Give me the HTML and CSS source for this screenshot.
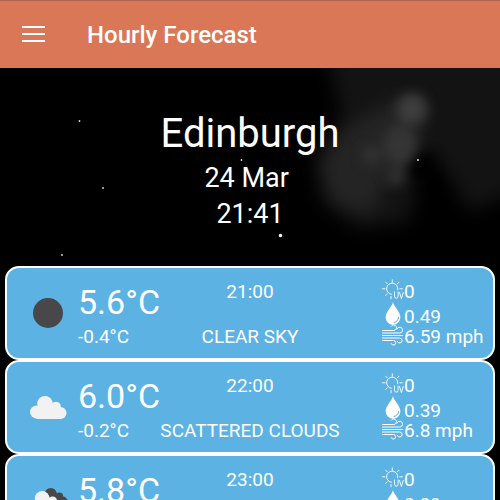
FILE: index.html
```html
<!DOCTYPE html>
<html lang="en">
<head>
<meta charset="utf-8">
<meta name="viewport" content="width=device-width, initial-scale=1">
<title>Hourly Forecast</title>
<link rel="stylesheet" href="styles.css">
</head>
<body>
<svg class="symbols" aria-hidden="true">
  <symbol id="uv" viewBox="0 0 22 22">
    <g fill="none" stroke="#fff" stroke-width="0.900" stroke-linecap="round">
      <path d="M9.500 15.300A5.600 5.600 0 1 1 15.700 10.800"/>
      <path d="M10.300 0.800v2.400M3.700 3.200l1.700 1.700M17 3.200l-1.700 1.700M0.500 9.800h2.600M17.800 9.800h2.600M3.700 16.500l1.700-1.700M9 17.400v2.400"/>
      <path d="M12.500 13v4.200q0 2 1.800 2t1.800-2V13M17.500 13.500l1.900 6 1.900-6"/>
    </g>
  </symbol>
  <symbol id="drop" viewBox="0 0 22 24">
    <path fill="#fff" d="M11 0C10.300 4.500 3.600 9.800 3.600 15.300a7.400 7.400 0 0 0 14.800 0C18.400 9.800 11.700 4.500 11 0z"/>
    <path fill="none" stroke="#5cb2e2" stroke-width="1" stroke-linecap="round" d="M16.600 15.500a5 5 0 0 1-4.600 5"/>
  </symbol>
  <symbol id="wind" viewBox="0 0 22 22">
    <g fill="none" stroke="#fff" stroke-width="1" stroke-linecap="round">
      <path d="M0.500 6.500h11.200a2.800 2.800 0 1 0-2.400-4.300"/>
      <path d="M0.500 9h17.200a2.900 2.900 0 1 0-2.800-3.800"/>
      <path d="M0.500 11.500h20"/>
      <path d="M0.500 14h17.200a2.500 2.500 0 1 1-2.500 3.200"/>
      <path d="M0.500 16.500h11a2.300 2.300 0 1 1-2.200 3.200"/>
    </g>
  </symbol>
  <symbol id="cloud" viewBox="0 0 37 23">
    <circle cx="6.500" cy="16" r="6.500"/>
    <circle cx="15" cy="7.800" r="7.800"/>
    <circle cx="26" cy="10.500" r="4.800"/>
    <circle cx="30.500" cy="17" r="6"/>
    <path d="M6 11h23l2 5v7H6.500z"/>
  </symbol>
</svg>

<header class="app-bar">
  <button class="menu" type="button" aria-label="Open menu">
    <svg viewBox="0 0 24 18" width="24" height="18" aria-hidden="true"><path d="M1 2h23M1 9h23M1 16h23" stroke="#fff" stroke-width="2"/></svg>
  </button>
  <h1 class="title">Hourly Forecast</h1>
</header>

<main>
  <section class="place">
    <svg class="sky" viewBox="0 0 500 198" preserveAspectRatio="xMidYMid slice" aria-hidden="true">
      <defs>
        <filter id="haze" x="-50%" y="-50%" width="200%" height="200%" color-interpolation-filters="sRGB"><feGaussianBlur stdDeviation="9"/></filter>
        <filter id="glow" x="-50%" y="-50%" width="200%" height="200%" color-interpolation-filters="sRGB"><feGaussianBlur stdDeviation="6"/></filter>
      </defs>
      <g filter="url(#haze)">
        <path fill="#131313" d="M325-20h190v145l-45 18-28-45-20-20-12 75-52 8-36-28-5-50 25-35z"/>
        <path fill="#242424" d="M345 60l45-25 28-10 8 20-10 35-28 30-16 35-40-8-15-40z"/>
      </g>
      <g filter="url(#glow)">
        <circle cx="412" cy="41" r="15" fill="#3e3e3e"/>
        <ellipse cx="400" cy="77" rx="17" ry="20" fill="#353535"/>
        <circle cx="371" cy="87" r="9" fill="#343434"/>
        <circle cx="396" cy="108" r="10" fill="#303030"/>
        <path fill="#000" d="M409 101l10-16 14 4-2 18-16 6z"/>
      </g>
      <g fill="#ddd">
        <circle cx="79.500" cy="53" r="0.900"/>
        <circle cx="103" cy="120" r="0.900"/>
        <circle cx="62" cy="187" r="0.900"/>
        <circle cx="241.500" cy="92" r="0.900"/>
        <circle cx="418" cy="92" r="1"/>
        <circle cx="280.500" cy="167.500" r="1.700" fill="#fff"/>
      </g>
    </svg>
    <h2 class="city">Edinburgh</h2>
    <p class="now">24 Mar </p>
    <p class="now">21:41</p>
  </section>

  <section class="hours" aria-label="Hours">
    <article class="hour">
      <svg class="weather" viewBox="0 0 40 40" role="img" aria-label="Clear sky"><circle cx="20" cy="20" r="15" fill="#48484a"/></svg>
      <div class="temps"><span class="temp">5.6°C</span><span>-0.4°C</span></div>
      <div class="summary"><time>21:00</time><span>CLEAR SKY</span></div>
      <ul class="stats">
        <li><svg class="icon"><use href="#uv"/></svg>0</li>
        <li class="rain"><svg class="icon"><use href="#drop"/></svg>0.49</li>
        <li><svg class="icon"><use href="#wind"/></svg>6.59 mph</li>
      </ul>
    </article>
    <article class="hour">
      <svg class="weather" viewBox="0 0 40 40" role="img" aria-label="Scattered clouds"><use href="#cloud" x="2" y="9" width="37" height="23" fill="#f2f2f2"/></svg>
      <div class="temps"><span class="temp">6.0°C</span><span>-0.2°C</span></div>
      <div class="summary"><time>22:00</time><span>SCATTERED CLOUDS</span></div>
      <ul class="stats">
        <li><svg class="icon"><use href="#uv"/></svg>0</li>
        <li class="rain"><svg class="icon"><use href="#drop"/></svg>0.39</li>
        <li><svg class="icon"><use href="#wind"/></svg>6.8 mph</li>
      </ul>
    </article>
    <article class="hour">
      <svg class="weather" viewBox="0 0 40 40" role="img" aria-label="Broken clouds"><use href="#cloud" x="11" y="7" width="29" height="18" fill="#48484a"/><use href="#cloud" x="0" y="10" width="35" height="22" fill="#f2f2f2"/></svg>
      <div class="temps"><span class="temp">5.8°C</span><span>-0.5°C</span></div>
      <div class="summary"><time>23:00</time><span>BROKEN CLOUDS</span></div>
      <ul class="stats">
        <li><svg class="icon"><use href="#uv"/></svg>0</li>
        <li class="rain"><svg class="icon"><use href="#drop"/></svg>0.39</li>
        <li><svg class="icon"><use href="#wind"/></svg>6.8 mph</li>
      </ul>
    </article>
  </section>
</main>
</body>
</html>
```

FILE: styles.css
```css
* {
  box-sizing: border-box;
}

html {
  scrollbar-width: none;
  background: #000;
}

body {
  margin: 0;
  color: #fff;
  font-family: Roboto, "Liberation Sans", sans-serif;
  font-size: 19px;
  line-height: 20px;
}

.symbols {
  display: none;
}

.app-bar {
  display: flex;
  align-items: center;
  gap: 41px;
  padding: 17px 20px 15px;
  border-top: 1px solid #a96550;
  background: #da7756;
}

.menu {
  display: flex;
  width: 26px;
  padding: 0 1px 3px;
  border: 0;
  background: none;
}

.title {
  margin: 0;
  font-size: 24px;
  font-weight: 500;
  line-height: 35px;
}

.place {
  position: relative;
  padding: 42px 0 34px;
  text-align: center;
}

.sky {
  position: absolute;
  inset: 0;
  width: 100%;
  height: 100%;
}

.city {
  position: relative;
  margin: 0 0 2px;
  font-size: 40px;
  font-weight: 400;
  line-height: 48px;
}

.now {
  position: relative;
  margin: 0;
  font-size: 27px;
  line-height: 36px;
  white-space: pre;
}

.hours {
  padding: 0 5px;
}

.hour {
  display: grid;
  grid-template-columns: 71px 83px minmax(0, 1fr) 154px;
  padding: 14px 0 11px;
  border: 2px solid #fff;
  border-radius: 14px;
  background: #5cb2e2;
}

.weather {
  width: 40px;
  height: 40px;
  margin: 11px 0 0 21px;
}

.temps,
.summary,
.stats {
  display: flex;
  flex-direction: column;
  justify-content: space-between;
  white-space: nowrap;
}

.temp {
  font-size: 34px;
  line-height: 40px;
}

.summary {
  align-items: center;
}

.stats {
  margin: 0;
  padding: 0 0 0 43px;
  list-style: none;
}

.stats li {
  display: flex;
  align-items: flex-end;
  height: 20px;
}

.stats .rain {
  height: 25px;
}

.icon {
  width: 22px;
  height: 22px;
  margin-bottom: 1px;
  flex: none;
}

.rain .icon {
  height: 24px;
}
```
